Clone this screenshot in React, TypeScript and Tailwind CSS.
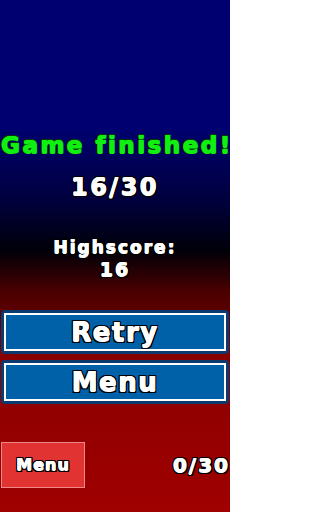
const outline =
  "[text-shadow:0.5px_0_0_#fff,-0.5px_0_0_#fff,0_0.5px_0_#fff,1.5px_1.5px_0_#000,-1.5px_-1.5px_0_#000,1.5px_-1.5px_0_#000,-1.5px_1.5px_0_#000,0_1.5px_0_#000,0_-1.5px_0_#000,1.5px_0_0_#000,-1.5px_0_0_#000]";

function BigButton({ label }: { label: string }) {
  return (
    <button className="mx-px flex h-[44px] w-[228px] items-center justify-center rounded-[4px] bg-[#0d3a6e] p-[3px]">
      <span
        className={`flex h-full w-full items-center justify-center border-2 border-white bg-[#0060a8] text-[26px] font-bold leading-none tracking-[1.5px] text-white ${outline}`}
      >
        {label}
      </span>
    </button>
  );
}

export default function App() {
  return (
    <div className="flex h-[512px] w-[230px] flex-col overflow-hidden bg-[linear-gradient(to_bottom,#000070_0%,#000070_25%,#00003e_39%,#000008_49%,#4a0000_57%,#8a0000_70%,#a00000_100%)] font-['DejaVu_Sans',sans-serif]">
      <div className="mt-[132px] flex justify-start pl-px">
        <h1 className="whitespace-nowrap text-[23px] font-bold leading-[26px] tracking-[2.5px] text-[#11ee11] [text-shadow:0.5px_0_0_#11ee11,-0.5px_0_0_#11ee11,0_0.5px_0_#11ee11,1px_1px_0_#063806,-1px_-1px_0_#063806,1px_-1px_0_#063806,-1px_1px_0_#063806]">
          Game finished!
        </h1>
      </div>
      <p
        className={`mt-[15px] text-center text-[24px] font-bold leading-[28px] tracking-[2.5px] text-white ${outline}`}
      >
        16/30
      </p>
      <div
        className={`mt-[36px] flex flex-col items-center text-[17px] font-bold leading-[21px] tracking-[2px] text-white ${outline}`}
      >
        <span>Highscore:</span>
        <span className="text-[19px] leading-[22px]">16</span>
      </div>
      <div className="mt-[30px] flex flex-col gap-[6px]">
        <BigButton label="Retry" />
        <BigButton label="Menu" />
      </div>
      <div className="mt-[38px] flex items-center justify-between">
        <button
          className={`ml-px flex h-[46px] w-[84px] items-center justify-center border border-[#f08888] bg-[#e23333] text-[16px] font-bold leading-none tracking-[1px] text-white ${outline}`}
        >
          Menu
        </button>
        <span
          className={`whitespace-nowrap text-[20px] font-bold leading-none tracking-[2px] text-white ${outline}`}
        >
          0/30
        </span>
      </div>
    </div>
  );
}
